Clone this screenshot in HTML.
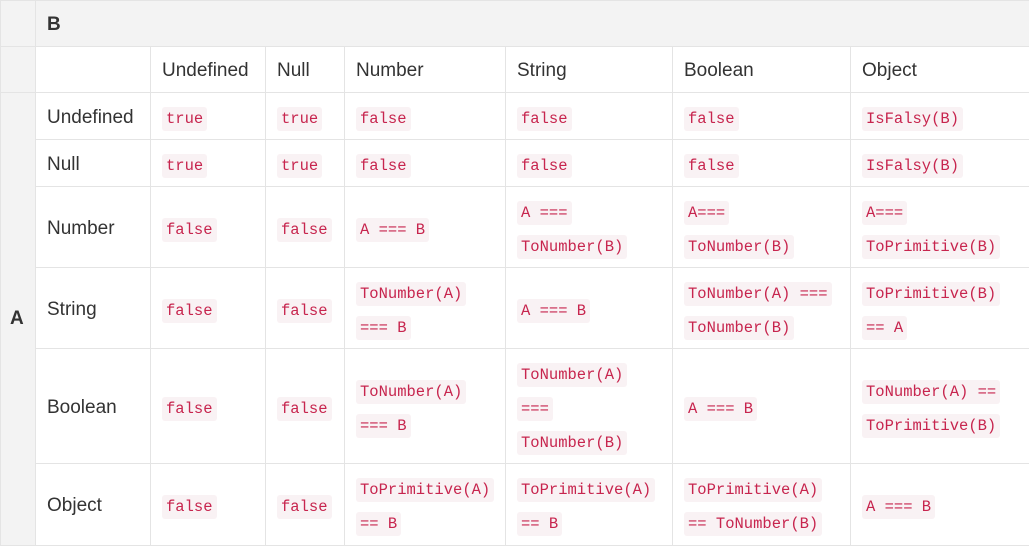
<!DOCTYPE html>
<html><head><meta charset="utf-8"><style>
body{margin:0;background:#fff;font-family:"Liberation Sans",sans-serif;color:#333;}
table{border-collapse:collapse;table-layout:fixed;position:absolute;left:0;top:0;width:1030px;}
td{border:1px solid #e4e4e4;padding:3px 11px 0;font-size:19px;vertical-align:middle;white-space:nowrap;}
.g{background:#f3f3f3;}
code{font-family:"Liberation Mono",monospace;font-size:15.5px;color:#c7254e;background:#f9f2f4;padding:3px 4px;border-radius:3px;}
.l{line-height:34px;height:34px;}
b{font-weight:bold;}
</style></head><body>
<table>
<colgroup><col style="width:35px"><col style="width:115px"><col style="width:115px"><col style="width:79px"><col style="width:161px"><col style="width:167px"><col style="width:178px"><col style="width:179px"></colgroup>
<tr style="height:46px"><td class="g"></td><td class="g" colspan="7"><b>B</b></td></tr>
<tr style="height:46px"><td class="g"></td><td></td><td>Undefined</td><td>Null</td><td>Number</td><td>String</td><td>Boolean</td><td>Object</td></tr>
<tr style="height:47px"><td class="g" rowspan="6" style="padding:0 9px"><b>A</b></td><td>Undefined</td><td><code>true</code></td><td><code>true</code></td><td><code>false</code></td><td><code>false</code></td><td><code>false</code></td><td><code>IsFalsy(B)</code></td></tr>
<tr style="height:47px"><td>Null</td><td><code>true</code></td><td><code>true</code></td><td><code>false</code></td><td><code>false</code></td><td><code>false</code></td><td><code>IsFalsy(B)</code></td></tr>
<tr style="height:81px"><td>Number</td><td><code>false</code></td><td><code>false</code></td><td><code>A === B</code></td><td><div class="l"><code>A ===</code></div><div class="l"><code>ToNumber(B)</code></div></td><td><div class="l"><code>A===</code></div><div class="l"><code>ToNumber(B)</code></div></td><td><div class="l"><code>A===</code></div><div class="l"><code>ToPrimitive(B)</code></div></td></tr>
<tr style="height:81px"><td>String</td><td><code>false</code></td><td><code>false</code></td><td><div class="l"><code>ToNumber(A)</code></div><div class="l"><code>=== B</code></div></td><td><code>A === B</code></td><td><div class="l"><code>ToNumber(A) ===</code></div><div class="l"><code>ToNumber(B)</code></div></td><td><div class="l"><code>ToPrimitive(B)</code></div><div class="l"><code>== A</code></div></td></tr>
<tr style="height:115px"><td>Boolean</td><td><code>false</code></td><td><code>false</code></td><td><div class="l"><code>ToNumber(A)</code></div><div class="l"><code>=== B</code></div></td><td><div class="l"><code>ToNumber(A)</code></div><div class="l"><code>===</code></div><div class="l"><code>ToNumber(B)</code></div></td><td><code>A === B</code></td><td><div class="l"><code>ToNumber(A) ==</code></div><div class="l"><code>ToPrimitive(B)</code></div></td></tr>
<tr style="height:82px"><td>Object</td><td><code>false</code></td><td><code>false</code></td><td><div class="l"><code>ToPrimitive(A)</code></div><div class="l"><code>== B</code></div></td><td><div class="l"><code>ToPrimitive(A)</code></div><div class="l"><code>== B</code></div></td><td><div class="l"><code>ToPrimitive(A)</code></div><div class="l"><code>== ToNumber(B)</code></div></td><td><code>A === B</code></td></tr>
</table>
</body></html>
